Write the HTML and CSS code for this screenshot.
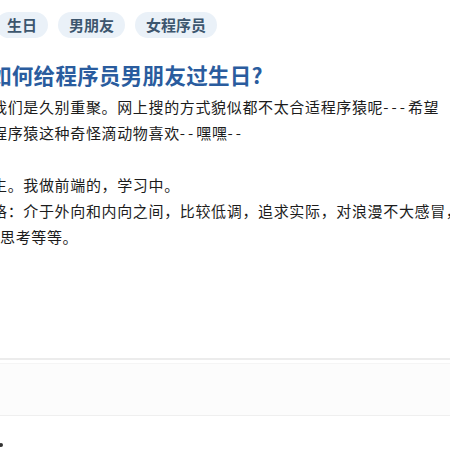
FILE: index.html
```html
<!DOCTYPE html>
<html lang="zh-CN">
<head>
<meta charset="utf-8">
<title>如何给程序员男朋友过生日？</title>
<link rel="stylesheet" href="styles.css">
</head>
<body>
<div class="question">
  <div class="tags">
    <span class="tag">生日</span>
    <span class="tag">男朋友</span>
    <span class="tag">女程序员</span>
  </div>
  <h1 class="title">如何给程序员男朋友过生日?</h1>
  <div class="detail">
    <p class="para">我们是久别重聚。网上搜的方式貌似都不太合适程序猿呢<span class="dash">---</span>希望<br>程序猿这种奇怪滴动物喜欢<span class="dash">--</span>嘿嘿<span class="dash">--</span></p>
    <p class="para">生。我做前端的，学习中。<br>格：介于外向和内向之间，比较低调，追求实际，对浪漫不大感冒，<br><span class="shift">思考等等。</span></p>
  </div>
</div>
<div class="panel"></div>
<div class="footer"><span class="dot"></span></div>
</body>
</html>
```
FILE: styles.css
```css
html, body {
  margin: 0;
  padding: 0;
  background: #ffffff;
  overflow: hidden;
}

body {
  width: 450px;
  height: 450px;
  font-family: "Noto Sans CJK SC", "Noto Sans", sans-serif;
  color: #222222;
}

.question {
  margin-left: -10px;
  padding-top: 12px;
  height: 346px;
}

.tags {
  display: flex;
  gap: 10px;
  margin-left: 6px;
}

.tag {
  display: inline-block;
  height: 26px;
  line-height: 26px;
  padding: 0 11px;
  border-radius: 13px;
  background: #eaf1f8;
  color: #3d566e;
  font-size: 15px;
  font-weight: 700;
  white-space: nowrap;
}

.title {
  margin: 22px 0 0;
  font-size: 21.5px;
  line-height: 30px;
  font-weight: 700;
  letter-spacing: 0.3px;
  color: #2a5c9e;
  white-space: nowrap;
}

.detail {
  margin-top: 4px;
  margin-left: 2px;
  font-size: 15px;
  line-height: 26px;
  letter-spacing: 0.65px;
  color: #1c1c1c;
  white-space: nowrap;
}

.para {
  margin: 0 0 26px;
}

/* hyphen runs are drawn a little wider than the font's own */
.dash {
  letter-spacing: 3px;
}

.shift {
  margin-left: 8px;
}

.panel {
  height: 55px;
  border-top: 2px solid #ececec;
  border-bottom: 1px solid #efefef;
  background: #fcfcfc;
  box-shadow: inset 0 3px 0 #ffffff, inset 0 4px 0 #f5f5f5;
}

.footer {
  height: 40px;
  position: relative;
}

.dot {
  position: absolute;
  left: -1px;
  top: 27px;
  width: 4px;
  height: 4px;
  border-radius: 50%;
  background: #333333;
}
```
